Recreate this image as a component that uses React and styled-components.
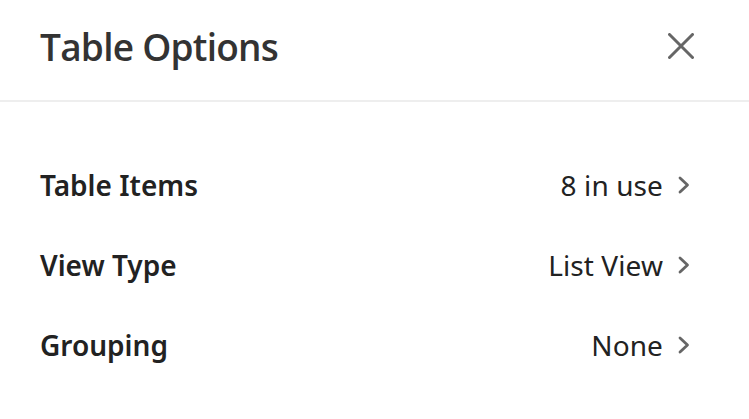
import React from "react";
import styled, { createGlobalStyle } from "styled-components";

const Global = createGlobalStyle`
  html, body { margin: 0; padding: 0; background: #fff; }
  body { font-family: "Noto Sans", "Open Sans", sans-serif; -webkit-font-smoothing: antialiased; }
`;

const Panel = styled.div`
  width: 749px;
  height: 419px;
  background: #fff;
  display: flex;
  flex-direction: column;
`;

const Header = styled.header`
  height: 102px;
  box-sizing: border-box;
  padding: 0 55px 0 40px;
  display: flex;
  align-items: center;
  justify-content: space-between;
  border-bottom: 2px solid #eeeeee;
`;

const Title = styled.h1`
  margin: 0;
  font-family: "Open Sans", "Noto Sans", sans-serif;
  font-weight: 600;
  font-size: 37px;
  color: #333;
  letter-spacing: -0.75px;
  transform: translateY(-4px);
`;

const CloseButton = styled.button`
  border: none;
  background: none;
  padding: 0;
  width: 26px;
  height: 26px;
  display: flex;
  cursor: pointer;
  transform: translateY(-4px);
`;

const List = styled.ul`
  list-style: none;
  margin: 0;
  padding: 43px 0 0;
`;

const Row = styled.li`
  height: 80px;
  box-sizing: border-box;
  padding: 0 59px 0 40px;
  display: flex;
  align-items: center;
  justify-content: space-between;
`;

const Label = styled.span`
  font-weight: 600;
  font-size: 28px;
  color: #222;
`;

const ValueGroup = styled.span`
  display: flex;
  align-items: center;
  gap: 15px;
`;

const Value = styled.span`
  font-weight: 400;
  font-size: 28px;
  color: #222;
  letter-spacing: 0.1px;
`;

const Chevron = () => (
  <svg width="12" height="18" viewBox="0 0 12 18" fill="none">
    <path d="M2 2l7.5 7L2 16" stroke="#666" strokeWidth="2.8" strokeLinecap="round" strokeLinejoin="round" />
  </svg>
);

const CloseIcon = () => (
  <svg width="26" height="26" viewBox="0 0 26 26" fill="none">
    <path d="M1.5 1.5l23 23M24.5 1.5l-23 23" stroke="#666" strokeWidth="3" strokeLinecap="round" />
  </svg>
);

const rows = [
  { label: "Table Items", value: "8 in use" },
  { label: "View Type", value: "List View" },
  { label: "Grouping", value: "None" },
];

export default function App() {
  return (
    <>
      <Global />
      <Panel>
        <Header>
          <Title>Table Options</Title>
          <CloseButton aria-label="Close">
            <CloseIcon />
          </CloseButton>
        </Header>
        <List>
          {rows.map((r) => (
            <Row key={r.label}>
              <Label>{r.label}</Label>
              <ValueGroup>
                <Value>{r.value}</Value>
                <Chevron />
              </ValueGroup>
            </Row>
          ))}
        </List>
      </Panel>
    </>
  );
}
